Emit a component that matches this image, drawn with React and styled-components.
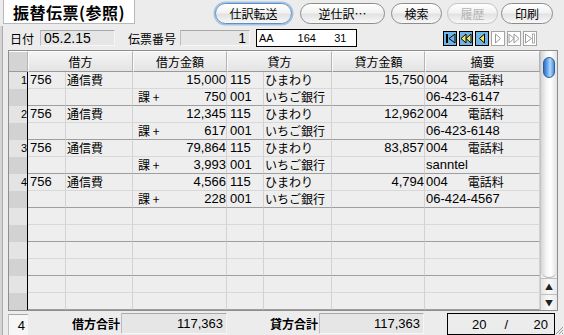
import React from 'react';
import styled, { createGlobalStyle, css } from 'styled-components';

const Global = createGlobalStyle`
  html, body { margin: 0; padding: 0; background: #ececec; }
  body { font-family: "Noto Sans CJK JP", "Noto Sans", sans-serif; color: #000; }
  * { box-sizing: border-box; }
`;

const Window = styled.div`
  width: 564px;
  height: 335px;
  background: #ececec;
  overflow: hidden;
  position: relative;
  display: flex;
  flex-direction: column;
`;

const TopBar = styled.div`
  height: 26px;
  display: flex;
  align-items: flex-start;
`;

const Body = styled.div`
  flex: 1;
  display: flex;
  flex-direction: column;
  background: linear-gradient(to right, #d4d4d4 0 2px, #ababab 2px 3px, #ececec 3px);
`;

const TitleBox = styled.div`
  margin-left: 3px;
  width: 132px;
  height: 24px;
  background: #fff;
  border: 1px solid #b8b8b8;
  border-top: none;
  font-size: 16px;
  font-weight: bold;
  display: flex;
  align-items: center;
  justify-content: center;
  letter-spacing: 0.5px;
`;

const ButtonRow = styled.div`
  display: flex;
  margin-left: 80px;
  margin-top: 3px;
`;

const PillButton = styled.div`
  width: ${p => p.$w}px;
  margin-left: ${p => p.$ml || 0}px;
  height: 21px;
  border-radius: 11px;
  border: 1px solid ${p => (p.$disabled ? '#c4c4c4' : '#8c8c8c')};
  background: linear-gradient(#ffffff, #f2f2f2 45%, #e2e2e2 55%, #f8f8f8);
  font-size: 12px;
  display: flex;
  align-items: center;
  justify-content: center;
  color: ${p => (p.$disabled ? '#b4b4b4' : '#000')};
  ${p =>
    p.$default &&
    css`
      border-color: #5d8fc6;
      box-shadow: 0 0 0 1.5px rgba(110, 160, 215, 0.55);
    `}
`;

const InfoRow = styled.div`
  height: 24px;
  display: flex;
  align-items: center;
`;

const Label = styled.div`
  margin-left: ${p => p.$ml}px;
  width: ${p => p.$w}px;
  font-size: 12px;
  font-weight: ${p => (p.$bold ? 'bold' : 'normal')};
  white-space: nowrap;
`;

const InsetBox = styled.div`
  width: ${p => p.$w}px;
  height: ${p => p.$h || 16}px;
  background: #e6e6e6;
  border-top: 1px solid #a8a8a8;
  border-left: 1px solid #bcbcbc;
  border-right: 1px solid #f6f6f6;
  border-bottom: 1px solid #f6f6f6;
  font-size: ${p => p.$fs || 12}px;
  font-family: "Liberation Sans", "Noto Sans", sans-serif;
  display: flex;
  align-items: center;
  justify-content: ${p => (p.$right ? 'flex-end' : 'flex-start')};
  padding: 0 3px;
  white-space: nowrap;
`;

const CodeBox = styled.div`
  margin-left: 6px;
  width: 101px;
  height: 18px;
  background: #fff;
  border: 1px solid #000;
  font-family: "Liberation Sans", sans-serif;
  font-size: 11px;
  display: flex;
  align-items: center;
  padding-left: 2px;
  white-space: pre;
`;

const Nav = styled.div`
  margin-left: auto;
  margin-right: 27px;
  display: flex;
  gap: 2px;
`;

const NavBtn = styled.div`
  width: 14px;
  height: 15px;
  border: 1px solid ${p => (p.$active ? '#000' : '#a4a4a4')};
  background: ${p => (p.$active ? '#70b4e6' : '#fff')};
  display: flex;
  align-items: center;
  justify-content: center;
`;

const Frame = styled.div`
  margin-left: 8px;
  width: 550px;
  height: 261px;
  border: 1px solid #8e8e8e;
  display: flex;
`;

const GridArea = styled.div`
  width: 531px;
  display: flex;
  flex-direction: column;
`;

const COLS = '19px 38px 67px 94px 37px 68px 93px 115px';

const HeaderRow = styled.div`
  display: grid;
  grid-template-columns: 19px 105px 94px 105px 93px 115px;
  height: 21px;
`;

const HeadCell = styled.div`
  height: 21px;
  background: ${p => (p.$corner ? '#d4d4d4' : 'linear-gradient(#f4f4f4, #e4e4e4)')};
  border-top: 1px solid #fff;
  border-bottom: 1px solid #9a9a9a;
  border-right: 1px solid #b4b4b4;
  border-left: ${p => (p.$corner ? 'none' : '1px solid #fafafa')};
  font-size: 12px;
  display: flex;
  align-items: center;
  justify-content: center;
`;

const Row = styled.div`
  display: grid;
  grid-template-columns: ${COLS};
  height: 17px;
`;

const NumCell = styled.div`
  height: 17px;
  background: ${p => (p.$odd ? '#e4e4e4' : '#d2d2d2')};
  border-right: 1px solid #000;
  font-size: 11px;
  font-family: "Liberation Sans", sans-serif;
  text-align: right;
  line-height: 17px;
  padding-right: 0;
`;

const Cell = styled.div`
  height: 17px;
  background: #eeeeee;
  border-right: 1px solid #d2d2d2;
  border-bottom: 1px solid ${p => (p.$groupEnd ? '#9e9e9e' : '#d8d8d8')};
  font-size: 12px;
  line-height: 16px;
  white-space: nowrap;
  overflow: hidden;
  padding-left: ${p => p.$pl ?? 1}px;
  padding-right: ${p => p.$pr ?? 0}px;
  display: flex;
  align-items: center;
  justify-content: ${p => (p.$right ? 'flex-end' : p.$split ? 'space-between' : 'flex-start')};
`;

const Num = styled.span`
  font-family: "Liberation Sans", sans-serif;
  font-size: 13px;
`;

const Kanji = styled.span`
  margin-left: ${p => p.$ml || 0}px;
`;

const Scrollbar = styled.div`
  width: 17px;
  display: flex;
  flex-direction: column;
  border-left: 1px solid #c4c4c4;
`;

const Track = styled.div`
  flex: 1;
  background: linear-gradient(to right, #d6d6d6, #f6f6f6 35%, #ffffff 60%, #e2e2e2);
  border-bottom-left-radius: 8px;
  border-bottom-right-radius: 8px;
  border-bottom: 1px solid #b8b8b8;
  padding-top: 6px;
  display: flex;
  justify-content: center;
`;

const Thumb = styled.div`
  width: 12px;
  height: 21px;
  border-radius: 6px;
  border: 1px solid #2d5d9a;
  background: linear-gradient(to right, #2f6fc4, #74b2f0 40%, #b4d8fa 60%, #4a8ede);
`;

const ArrowBtn = styled.div`
  height: 16px;
  background: linear-gradient(to right, #e4e4e4, #fafafa 50%, #e8e8e8);
  border-top: 1px solid #c0c0c0;
  display: flex;
  align-items: center;
  justify-content: center;
  font-size: 8px;
  color: #222;
`;

const Footer = styled.div`
  height: 24px;
  display: flex;
  align-items: center;
`;

const CountBox = styled.div`
  margin-left: 8px;
  width: 20px;
  height: 21px;
  margin-top: 3px;
  background: #f6f6f6;
  border-top: 1px solid #a8a8a8;
  border-left: 1px solid #bcbcbc;
  font-family: "Liberation Sans", sans-serif;
  font-size: 13px;
  display: flex;
  align-items: center;
  justify-content: flex-end;
  padding-right: 3px;
`;

const PageBox = styled.div`
  margin-left: 23px;
  width: 108px;
  height: 22px;
  margin-top: 2px;
  border: 1px solid #000;
  font-family: "Liberation Sans", sans-serif;
  font-size: 13px;
  display: flex;
  align-items: center;
  white-space: pre;
  padding-left: 24px;
`;

const Grip = styled.svg`
  position: absolute;
  right: 0;
  bottom: 0;
`;

const Y = '#f3e366';

const navIcons = [
  { active: true, el: (<><rect x="2" y="2" width="2" height="9" fill="#000" /><polygon points="11,2 5,6.5 11,11" fill="none" stroke="#000" /></>) },
  { active: true, el: (<><polygon points="6,2 1,6.5 6,11" fill={Y} stroke="#000" /><polygon points="11,2 6,6.5 11,11" fill={Y} stroke="#000" /></>) },
  { active: true, el: (<polygon points="8.5,2 3.5,6.5 8.5,11" fill={Y} stroke="#000" />) },
  { active: false, el: (<polygon points="3.5,2 8.5,6.5 3.5,11" fill="#fff" stroke="#9a9a9a" />) },
  { active: false, el: (<><polygon points="1,2 6,6.5 1,11" fill="#fff" stroke="#9a9a9a" /><polygon points="6,2 11,6.5 6,11" fill="#fff" stroke="#9a9a9a" /></>) },
  { active: false, el: (<><polygon points="1.5,2 7.5,6.5 1.5,11" fill="#fff" stroke="#9a9a9a" /><rect x="8.5" y="2" width="2" height="9" fill="#fff" stroke="#9a9a9a" strokeWidth="0.8" /></>) },
];

const entries = [
  { n: '1', amt: '15,000', amt2: '15,750', tax: '750', memo2: '06-423-6147' },
  { n: '2', amt: '12,345', amt2: '12,962', tax: '617', memo2: '06-423-6148' },
  { n: '3', amt: '79,864', amt2: '83,857', tax: '3,993', memo2: 'sanntel' },
  { n: '4', amt: '4,566', amt2: '4,794', tax: '228', memo2: '06-424-4567' },
];

function DataRow({ odd, groupEnd, n, c1, n1, kaz, a1, c2, n2, a2, memo }) {
  return (
    <Row>
      <NumCell $odd={odd}>{n}</NumCell>
      <Cell $groupEnd={groupEnd} $pl={2}><Num>{c1}</Num></Cell>
      <Cell $groupEnd={groupEnd} $pl={1}>{n1}</Cell>
      <Cell $groupEnd={groupEnd} $split $pl={5}>
        <span>{kaz}</span>
        <Num>{a1}</Num>
      </Cell>
      <Cell $groupEnd={groupEnd} $pl={3}><Num>{c2}</Num></Cell>
      <Cell $groupEnd={groupEnd} $pl={1}>{n2}</Cell>
      <Cell $groupEnd={groupEnd} $right><Num>{a2}</Num></Cell>
      <Cell $groupEnd={groupEnd} $pl={1}>{memo}</Cell>
    </Row>
  );
}

export default function App() {
  const rows = [];
  entries.forEach(e => {
    rows.push(
      <DataRow key={e.n + 'a'} odd n={e.n} c1="756" n1="通信費" a1={e.amt} c2="115" n2="ひまわり" a2={e.amt2}
        memo={<><Num>004</Num><Kanji $ml={20}>電話料</Kanji></>} />
    );
    rows.push(
      <DataRow key={e.n + 'b'} groupEnd kaz="課 +" a1={e.tax} c2="001" n2="いちご銀行" a2=""
        memo={<Num>{e.memo2}</Num>} />
    );
  });
  for (let i = 0; i < 6; i++) {
    rows.push(<DataRow key={'e' + i} odd={i % 2 === 0} groupEnd={i % 2 === 1} />);
  }

  return (
    <>
      <Global />
      <Window>
        <TopBar>
          <TitleBox>振替伝票(参照)</TitleBox>
          <ButtonRow>
            <PillButton $w={77} $default>仕訳転送</PillButton>
            <PillButton $w={85} $ml={8}>逆仕訳…</PillButton>
            <PillButton $w={51} $ml={6}>検索</PillButton>
            <PillButton $w={51} $ml={5} $disabled>履歴</PillButton>
            <PillButton $w={52} $ml={3}>印刷</PillButton>
          </ButtonRow>
        </TopBar>
        <Body>
          <InfoRow>
            <Label $ml={10} $w={30}>日付</Label>
            <InsetBox $w={75} $fs={14}>05.2.15</InsetBox>
            <Label $ml={13} $w={52}>伝票番号</Label>
            <InsetBox $w={70} $fs={14} $right>1</InsetBox>
            <CodeBox>{'AA        164      31'}</CodeBox>
            <Nav>
              {navIcons.map((ic, i) => (
                <NavBtn key={i} $active={ic.active}>
                  <svg width="12" height="13" viewBox="0 0 12 13">{ic.el}</svg>
                </NavBtn>
              ))}
            </Nav>
          </InfoRow>
          <Frame>
            <GridArea>
              <HeaderRow>
                <HeadCell $corner />
                <HeadCell>借方</HeadCell>
                <HeadCell>借方金額</HeadCell>
                <HeadCell>貸方</HeadCell>
                <HeadCell>貸方金額</HeadCell>
                <HeadCell>摘要</HeadCell>
              </HeaderRow>
              {rows}
            </GridArea>
            <Scrollbar>
              <Track><Thumb /></Track>
              <ArrowBtn>▲</ArrowBtn>
              <ArrowBtn>▼</ArrowBtn>
            </Scrollbar>
          </Frame>
          <Footer>
            <CountBox>4</CountBox>
            <Label $ml={44} $w={49} $bold>借方合計</Label>
            <InsetBox $w={106} $h={21} $fs={13} $right>117,363</InsetBox>
            <Label $ml={43} $w={49} $bold>貸方合計</Label>
            <InsetBox $w={105} $h={21} $fs={13} $right>117,363</InsetBox>
            <PageBox>{'20     /       20'}</PageBox>
          </Footer>
        </Body>
        <Grip width="9" height="9" viewBox="0 0 9 9">
          <line x1="8" y1="1" x2="1" y2="8" stroke="#999" />
          <line x1="8" y1="4" x2="4" y2="8" stroke="#999" />
          <line x1="8" y1="7" x2="7" y2="8" stroke="#999" />
        </Grip>
      </Window>
    </>
  );
}
